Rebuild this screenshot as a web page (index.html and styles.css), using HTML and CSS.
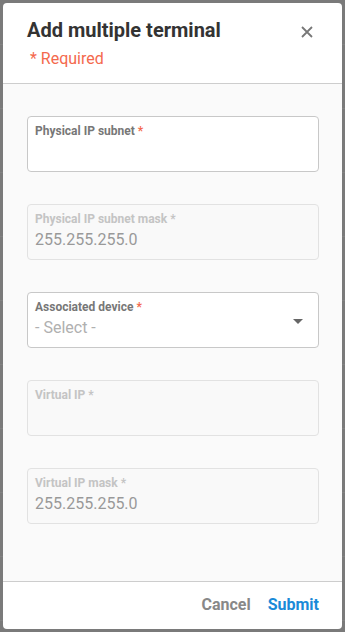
FILE: index.html
```html
<!DOCTYPE html>
<html lang="en">
  <head>
    <meta charset="utf-8">
    <meta name="viewport" content="width=device-width, initial-scale=1">
    <title>Add multiple terminal</title>
    <link rel="stylesheet" href="styles.css">
  </head>
  <body>
    <div class="backdrop">
      <div class="modal" role="dialog" aria-labelledby="modal-title">
        <header class="modal-header">
          <div class="modal-heading">
            <h2 id="modal-title" class="modal-title">Add multiple terminal</h2>
            <p class="required-note">* Required</p>
          </div>
          <button class="close-btn" type="button" aria-label="Close">
            <svg width="12" height="12" viewBox="0 0 12 12">
              <path d="M1 1L11 11M11 1L1 11" stroke="#777" stroke-width="1.8" fill="none"/>
            </svg>
          </button>
        </header>

        <div class="modal-body">
          <div class="field">
            <div class="field-label">Physical IP subnet <span class="req">*</span></div>
            <div class="field-value"></div>
          </div>
          <div class="field is-disabled">
            <div class="field-label">Physical IP subnet mask *</div>
            <div class="field-value">255.255.255.0</div>
          </div>
          <div class="field field-select">
            <div class="field-label">Associated device <span class="req">*</span></div>
            <div class="field-value placeholder">- Select -</div>
            <span class="caret"></span>
          </div>
          <div class="field is-disabled">
            <div class="field-label">Virtual IP *</div>
            <div class="field-value"></div>
          </div>
          <div class="field is-disabled">
            <div class="field-label">Virtual IP mask *</div>
            <div class="field-value">255.255.255.0</div>
          </div>
        </div>

        <footer class="modal-footer">
          <button class="btn btn-cancel" type="button">Cancel</button>
          <button class="btn btn-submit" type="button">Submit</button>
        </footer>
      </div>
    </div>
  </body>
</html>
```

FILE: styles.css
```css
html, body {
  margin: 0;
  height: 100%;
  font-family: Roboto, "Liberation Sans", Arial, sans-serif;
}
body {
  background: #7a7a7a;
}
.backdrop {
  height: 100vh;
  box-sizing: border-box;
  padding: 3px;
  background: repeating-linear-gradient(to bottom, transparent 0, transparent 44px, #828282 44px, #828282 45px, transparent 45px, transparent 64px);
}
.modal {
  height: 100%;
  background: #fff;
  border-radius: 4px;
  display: flex;
  flex-direction: column;
  overflow: hidden;
}
.modal-header {
  display: flex;
  justify-content: space-between;
  align-items: flex-start;
  padding: 15px 23px 14px 24px;
  border-bottom: 1px solid #cdcdcd;
}
.modal-title {
  margin: 0;
  font-size: 20px;
  line-height: 24px;
  font-weight: 700;
  color: #333;
}
.required-note {
  margin: 7px 0 0 3px;
  font-size: 16px;
  line-height: 20px;
  color: #f4694d;
}
.close-btn {
  width: 24px;
  height: 24px;
  margin-top: 2px;
  padding: 0;
  border: 0;
  background: none;
  display: flex;
  align-items: center;
  justify-content: center;
  cursor: pointer;
}
.modal-body {
  flex: 1;
  background: #fafafa;
  padding: 32px 23px 0 24px;
  display: flex;
  flex-direction: column;
  gap: 32px;
}
.field {
  position: relative;
  height: 56px;
  box-sizing: border-box;
  border: 1px solid #c8c8c8;
  border-radius: 4px;
  background: #fff;
  padding: 7px 7px 0;
}
.field-label {
  font-size: 12px;
  line-height: 14px;
  font-weight: 700;
  color: #777;
}
.req {
  color: #f4694d;
}
.field-value {
  margin-top: 4px;
  font-size: 16px;
  line-height: 20px;
  color: #999;
  min-height: 20px;
}
.field-value.placeholder {
  color: #b0b0b0;
}
.field.is-disabled {
  background: #f9f9f9;
  border-color: #e2e2e2;
}
.field.is-disabled .field-label {
  color: #c4c4c4;
}
.caret {
  position: absolute;
  right: 15px;
  top: 26px;
  width: 0;
  height: 0;
  border-left: 5px solid transparent;
  border-right: 5px solid transparent;
  border-top: 5px solid #666;
}
.modal-footer {
  display: flex;
  justify-content: flex-end;
  gap: 17px;
  padding: 13px 23px 0;
  height: 48px;
  box-sizing: border-box;
  border-top: 1px solid #cdcdcd;
}
.btn {
  padding: 0;
  border: 0;
  background: none;
  font-family: inherit;
  font-size: 16px;
  line-height: 20px;
  font-weight: 700;
  cursor: pointer;
  height: 20px;
}
.btn-cancel {
  color: #888;
}
.btn-submit {
  color: #1a8ad8;
}
```
